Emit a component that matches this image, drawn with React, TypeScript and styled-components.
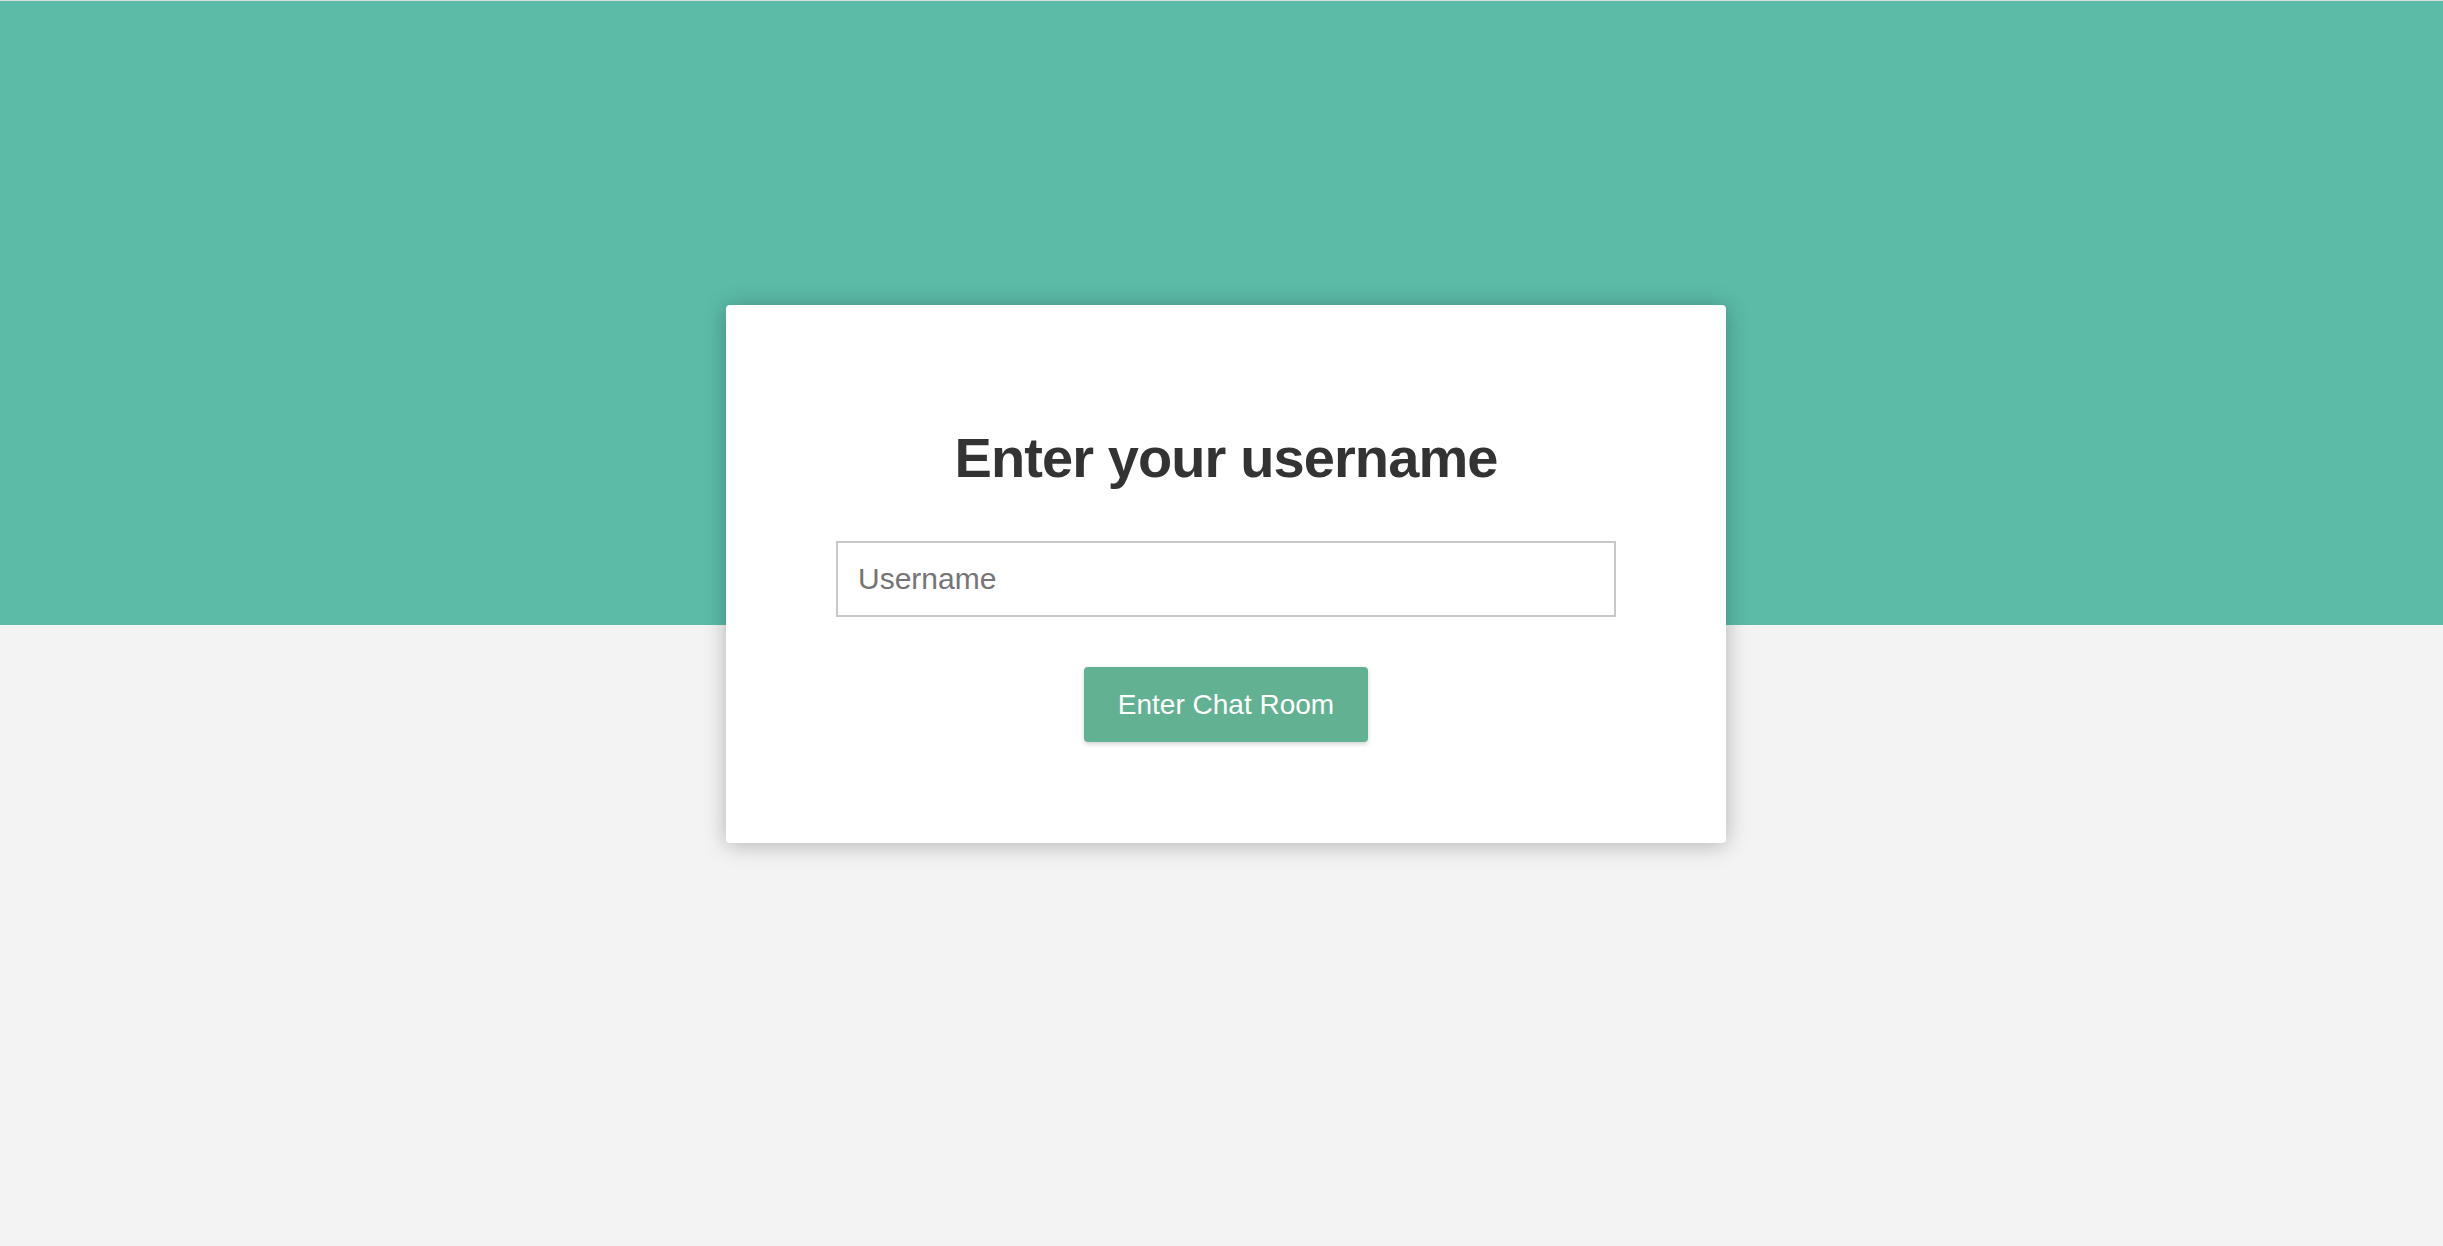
import React from "react";
import styled, { createGlobalStyle } from "styled-components";

const Global = createGlobalStyle`
  html, body { margin: 0; padding: 0; height: 100%; }
  body {
    background: #f3f3f3;
    color: #333;
    font-family: "Liberation Sans", Arial, Helvetica, sans-serif;
    overflow: hidden;
  }
  * { box-sizing: border-box; }
`;

const Page = styled.div`
  display: grid;
  grid-template-columns: 1fr;
  grid-template-rows: auto 1fr;
  min-height: 100vh;
  background: #f3f3f3;
`;

const Band = styled.div`
  grid-area: 1 / 1 / 2 / 2;
  height: 625px;
  background: #5bbba7;
  border-top: 1px solid #dcdcdc;
`;

const Stage = styled.div`
  grid-area: 1 / 1 / 3 / 2;
  display: flex;
  justify-content: center;
  align-items: flex-start;
  padding-top: 305px;
  padding-left: 9px;
`;

const Card = styled.form`
  width: 1000px;
  height: 538px;
  background: #fff;
  border-radius: 4px;
  box-shadow: 0 2px 22px rgba(0, 0, 0, 0.27);
  padding: 121px 110px 0;
  display: flex;
  flex-direction: column;
  align-items: center;
`;

const Title = styled.h1`
  margin: 0;
  height: 64px;
  font-size: 56px;
  line-height: 64px;
  font-weight: 700;
  letter-spacing: -0.9px;
  color: #333;
  text-align: center;
`;

const Input = styled.input`
  margin-top: 51px;
  width: 780px;
  height: 76px;
  border: 2px solid #c8c8c8;
  border-radius: 0;
  padding: 0 20px;
  font-family: "Liberation Sans", Arial, sans-serif;
  font-size: 30px;
  color: #333;
  outline: none;
  &::placeholder { color: #757575; }
`;

const Button = styled.button`
  margin-top: 50px;
  width: 284px;
  height: 75px;
  border: none;
  border-radius: 4px;
  background: #62b193;
  color: #fff;
  font-family: "Liberation Sans", Arial, sans-serif;
  font-size: 28px;
  box-shadow: 0 2px 5px rgba(0, 0, 0, 0.18);
  cursor: pointer;
`;

export default function App() {
  return (
    <>
      <Global />
      <Page>
        <Band />
        <Stage>
          <Card onSubmit={(e) => e.preventDefault()}>
            <Title>Enter your username</Title>
            <Input type="text" placeholder="Username" />
            <Button type="submit">Enter Chat Room</Button>
          </Card>
        </Stage>
      </Page>
    </>
  );
}
